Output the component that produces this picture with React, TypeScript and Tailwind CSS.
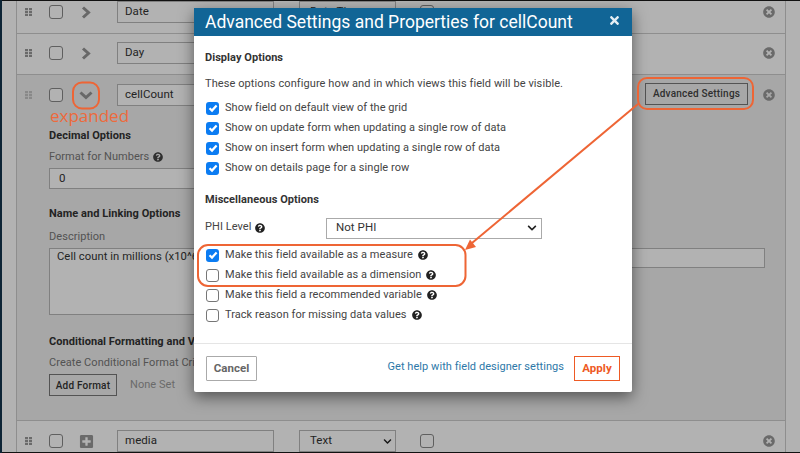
import React from "react";
import { FaChevronDown, FaPlusSquare, FaTimesCircle, FaQuestionCircle, FaTimes } from "react-icons/fa";

function Grip({ light }: { light?: boolean }) {
  return (
    <svg width="7" height="8" viewBox="0 0 7 8" fill={light ? "#c4c4c4" : "#999999"} className="shrink-0">
      <rect x="0" y="0" width="3" height="2.2" /><rect x="4" y="0" width="3" height="2.2" />
      <rect x="0" y="2.9" width="3" height="2.2" /><rect x="4" y="2.9" width="3" height="2.2" />
      <rect x="0" y="5.8" width="3" height="2.2" /><rect x="4" y="5.8" width="3" height="2.2" />
    </svg>
  );
}

function ChevRight() {
  return (
    <svg width="10" height="13" viewBox="0 0 10 13" fill="none" stroke="#959595" strokeWidth="3" className="-ml-[1px]">
      <path d="M2 1.5 L7.5 6.5 L2 11.5" />
    </svg>
  );
}

function ChevDown() {
  return (
    <svg width="14" height="9" viewBox="0 0 14 9" fill="none" stroke="#959595" strokeWidth="3" className="-ml-[3px]">
      <path d="M1.5 1.5 L7 6.5 L12.5 1.5" />
    </svg>
  );
}

function Box() {
  return <div className="w-[14px] h-[14px] shrink-0 rounded-[3px] border border-[#888888] bg-white" />;
}

function Row({ name, expander, type, tail, children, bg, light, top }: { name: string; expander: React.ReactNode; type: string; tail?: React.ReactNode; children?: React.ReactNode; bg: string; light?: boolean; top: string }) {
  return (
    <div className={`border-b border-[#cccccc] ${bg}`}>
      <div className={`flex items-start h-[40px] ${top}`}>
        <div className="w-[24px] pl-[8px] h-[22px] flex items-center shrink-0"><Grip light={light} /></div>
        <div className="w-[32px] pl-[8px] h-[22px] flex items-center shrink-0"><Box /></div>
        <div className="w-[44px] pl-[9px] h-[22px] flex items-center shrink-0">{expander}</div>
        <div className="w-[157px] h-[22px] border border-[#b8b8b8] bg-white pl-[7px] flex items-center text-[11.5px] text-[#333333] shrink-0">{name}</div>
        <div className="ml-[25px] w-[97px] h-[22px] border border-[#b8b8b8] bg-white pl-[10px] pr-[3px] flex items-center justify-between text-[11.5px] text-[#333333] shrink-0">
          {type}<FaChevronDown size={9} color="#222222" />
        </div>
        <div className="ml-[24px] w-[14px] h-[22px] flex items-center shrink-0"><Box /></div>
        <div className="flex-1 h-[22px] relative flex items-center justify-end pr-[10px]">
          {tail}
          <FaTimesCircle size={12} color="#999999" className="ml-[15px] -mt-[1px]" />
        </div>
      </div>
      {children}
    </div>
  );
}

function CheckRow({ checked, label, help }: { checked?: boolean; label: string; help?: boolean }) {
  return (
    <div className="flex items-center h-[20px]">
      {checked ? (
        <div className="w-[13px] h-[13px] ml-px rounded-[3px] bg-[#0b7cf2] flex items-center justify-center shrink-0">
          <svg width="10" height="10" viewBox="0 0 10 10" fill="none" stroke="white" strokeWidth="2.2"><path d="M1.5 5.2 L4 7.6 L8.6 2.4" /></svg>
        </div>
      ) : (
        <div className="w-[13px] h-[13px] ml-px rounded-[3px] border border-[#767676] bg-white shrink-0" />
      )}
      <span className="ml-[6px]">{label}</span>
      {help && <FaQuestionCircle size={10} color="#222222" className="ml-[5px]" />}
    </div>
  );
}

export default function App() {
  return (
    <div className="relative w-[800px] h-[453px] overflow-hidden bg-white text-[11px] text-[#777777] tracking-[0.05px]" style={{ fontFamily: "Roboto, sans-serif" }}>
      <div className="h-[453px] overflow-hidden">
        <div className="ml-[16px] mr-[14px] -mt-[7px] border-x border-[#cccccc] h-[470px]">
          <Row name="Date" type="Date Time" bg="bg-white" top="pt-[8px]" expander={<ChevRight />} />
          <Row name="Day" type="Integer" bg="bg-white" top="pt-[8px]" expander={<ChevRight />} />
          <Row
            name="cellCount"
            type="Decimal"
            bg="bg-[#f0f0f0]"
            light
            top="pt-[9px]"
            expander={<ChevDown />}
            tail={<div className="h-[22px] w-[103px] -mt-[3px] border border-[#777777] bg-[#f0f0f0] flex items-center justify-center text-[10px] tracking-[0.2px] font-medium text-[#444444]">Advanced Settings</div>}
          >
            <div className="pl-[32px] pr-[20px] pt-[11px] h-[305px]">
              <div className="font-bold text-[#333333] h-[20px] flex items-center">Decimal Options</div>
              <div className="mt-[3px] flex items-center h-[16px]">Format for Numbers <FaQuestionCircle size={10} color="#444444" className="ml-[4px]" /></div>
              <div className="mt-[3px] w-[220px] h-[21px] border border-[#b8b8b8] bg-white pl-[9px] flex items-center text-[11.5px] text-[#333333]">0</div>
              <div className="mt-[15px] font-bold text-[#333333] h-[20px] flex items-center">Name and Linking Options</div>
              <div className="mt-[5px] h-[16px] flex items-center">Description</div>
              <div className="mt-[3px] flex gap-[15px]">
                <div className="w-[300px] h-[67px] border border-[#b8b8b8] bg-white pl-[7px] text-[11.25px] text-[#333333] whitespace-nowrap">Cell count in millions (x10^6)</div>
                <div className="flex-1 h-[20px] border border-[#b8b8b8] bg-white" />
              </div>
              <div className="mt-[17px] font-bold text-[#333333] h-[20px] flex items-center whitespace-nowrap">Conditional Formatting and Validation Options</div>
              <div className="mt-[3px] h-[16px] flex items-center whitespace-nowrap">Create Conditional Format Criteria</div>
              <div className="mt-[3px] flex items-center">
                <div className="w-[68px] h-[22px] border border-[#777777] flex items-center justify-center text-[10px] tracking-[0.2px] font-medium text-[#333333]">Add Format</div>
                <span className="ml-[13px] text-[#999999]">None Set</span>
              </div>
            </div>
          </Row>
          <Row name="media" type="Text" bg="bg-white" top="pt-[9px]" expander={<FaPlusSquare size={15} color="#999999" className="-ml-[3px]" />} />
        </div>
      </div>

      {/* dim layer */}
      <div className="absolute inset-0 bg-black/30" />
      <div className="absolute inset-x-0 top-0 h-px bg-[#111111]" />
      <div className="absolute inset-x-0 bottom-0 h-px bg-[#111111]" />
      <div className="absolute inset-y-0 left-0 w-[2px] bg-[#0d2435]" />

      {/* modal */}
      <div className="absolute left-[194px] top-[8px] w-[438px] h-[384px] bg-white rounded-[2px] shadow-[0_5px_15px_rgba(0,0,0,0.5)] flex flex-col">
        <div className="h-[28px] bg-[#116596] flex items-center justify-between pl-[11px] pr-[11px] shrink-0">
          <span className="text-[17.5px] font-normal text-white tracking-normal whitespace-nowrap">Advanced Settings and Properties for cellCount</span>
          <FaTimes size={13} color="#e4eef4" className="-mt-[4px]" />
        </div>
        <div className="flex-1 px-[11px] pt-[14px] text-[#444444]">
          <div className="font-bold text-[#333333] h-[16px] flex items-center">Display Options</div>
          <div className="mt-[10px] h-[16px] flex items-center whitespace-nowrap tracking-[0.09px]">These options configure how and in which views this field will be visible.</div>
          <div className="mt-[6px]">
            <CheckRow checked label="Show field on default view of the grid" />
            <CheckRow checked label="Show on update form when updating a single row of data" />
            <CheckRow checked label="Show on insert form when updating a single row of data" />
            <CheckRow checked label="Show on details page for a single row" />
          </div>
          <div className="mt-[14px] font-bold text-[#333333] h-[16px] flex items-center">Miscellaneous Options</div>
          <div className="mt-[9px] flex items-center h-[22px]">
            <div className="w-[121px] flex items-center shrink-0 -mt-[1px]">PHI Level <FaQuestionCircle size={10} color="#222222" className="ml-[4px]" /></div>
            <div className="w-[216px] h-[21px] border border-[#aaaaaa] pl-[9px] pr-[4px] flex items-center justify-between text-[11.5px] text-[#333333]">
              Not PHI<FaChevronDown size={10} color="#222222" />
            </div>
          </div>
          <div className="mt-[6px]">
            <CheckRow checked label="Make this field available as a measure" help />
            <CheckRow label="Make this field available as a dimension" help />
            <CheckRow label="Make this field a recommended variable" help />
            <CheckRow label="Track reason for missing data values" help />
          </div>
        </div>
        <div className="h-[49px] border-t border-[#e5e5e5] px-[12px] pt-[12px] flex items-start shrink-0">
          <div className="w-[51px] h-[25px] border border-[#aaaaaa] rounded-[1px] flex items-center justify-center text-[11.5px] font-bold text-[#666666]">Cancel</div>
          <div className="ml-auto mt-[2px] text-[#2d78a8] h-[18px] flex items-center whitespace-nowrap">Get help with field designer settings</div>
          <div className="ml-[10px] w-[46px] h-[25px] border border-[#ee5a24] flex items-center justify-center text-[11.5px] font-bold text-[#ee5a24]">Apply</div>
        </div>
      </div>

      {/* annotations */}
      <div className="absolute left-[50px] top-[105px] text-[17px] leading-[22px] text-[#ed6a3c] tracking-normal" style={{ fontFamily: "Open Sans, sans-serif" }}>expanded</div>
      <svg className="absolute inset-0 pointer-events-none" width="800" height="453" fill="none" stroke="#ee6535" strokeWidth="2">
        <rect x="73" y="82.5" width="26" height="26" rx="9" />
        <rect x="638" y="78" width="115" height="31" rx="9" />
        <rect x="198" y="245" width="267.5" height="41" rx="10" />
        <path d="M638 104 L472 243" />
        <path d="M465 250 L470 239.5 L476 247 Z" fill="#ee6535" stroke="none" />
      </svg>
    </div>
  );
}
